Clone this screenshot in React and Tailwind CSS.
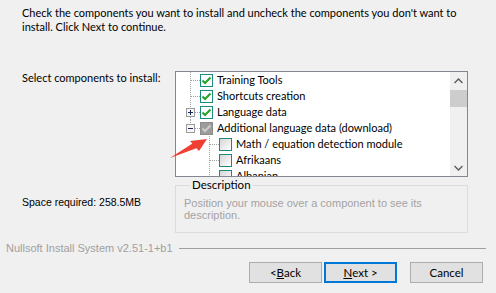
import React from 'react';

const ui = "font-['Lato',sans-serif]";
const tahoma = "font-['Liberation_Sans',sans-serif]";

const Dotted = (props) => (
  <line {...props} stroke="#a0a0a0" strokeWidth="1" strokeDasharray="1 1" />
);

const CheckBox = ({ state }) => {
  if (state === 'on') {
    return (
      <span className="w-[13px] h-[13px] border border-[#1c8a7e] bg-white flex items-center justify-center shrink-0">
        <svg width="11" height="11" viewBox="0 0 11 11">
          <polyline points="1.5,5.5 4,8 9.5,2.5" fill="none" stroke="#22a322" strokeWidth="2" />
        </svg>
      </span>
    );
  }
  if (state === 'gray') {
    return (
      <span className="w-[13px] h-[13px] border border-[#8c8c8c] bg-[#9c9c9c] flex items-center justify-center shrink-0">
        <svg width="11" height="11" viewBox="0 0 11 11">
          <polyline points="1.5,5.5 4,8 9.5,2.5" fill="none" stroke="#cdcdcd" strokeWidth="2" />
        </svg>
      </span>
    );
  }
  return <span className="w-[13px] h-[13px] border border-[#1c8a7e] bg-linear-to-br from-[#d6d6d6] to-white shrink-0" />;
};

const Expander = ({ open }) => (
  <>
    <rect x="10.5" y="4.5" width="8" height="8" fill="#f7f7f7" stroke="#9a9a9a" />
    <line x1="12" y1="8.5" x2="17" y2="8.5" stroke="#1b2a5a" />
    {!open && <line x1="14.5" y1="6" x2="14.5" y2="11" stroke="#1b2a5a" />}
  </>
);

const Gutter1 = ({ kind }) => (
  <svg width="24" height="16" className="shrink-0">
    {kind === 'leaf' && (
      <>
        <Dotted x1="14.5" y1="0" x2="14.5" y2="16" />
        <Dotted x1="15" y1="8.5" x2="24" y2="8.5" />
      </>
    )}
    {kind === 'plus' && (
      <>
        <Dotted x1="14.5" y1="0" x2="14.5" y2="4" />
        <Dotted x1="14.5" y1="13" x2="14.5" y2="16" />
        <Dotted x1="19" y1="8.5" x2="24" y2="8.5" />
        <Expander open={false} />
      </>
    )}
    {kind === 'minus' && (
      <>
        <Dotted x1="14.5" y1="0" x2="14.5" y2="4" />
        <Dotted x1="19" y1="8.5" x2="24" y2="8.5" />
        <Expander open />
      </>
    )}
  </svg>
);

const Gutter2 = () => (
  <svg width="43" height="16" className="shrink-0">
    <Dotted x1="33.5" y1="0" x2="33.5" y2="16" />
    <Dotted x1="34" y1="8.5" x2="43" y2="8.5" />
  </svg>
);

const rows = [
  { level: 1, kind: 'leaf', box: 'on', label: 'Training Tools' },
  { level: 1, kind: 'leaf', box: 'on', label: 'Shortcuts creation' },
  { level: 1, kind: 'plus', box: 'on', label: 'Language data' },
  { level: 1, kind: 'minus', box: 'gray', label: 'Additional language data (download)' },
  { level: 2, box: 'off', label: 'Math / equation detection module' },
  { level: 2, box: 'off', label: 'Afrikaans' },
  { level: 2, box: 'off', label: 'Albanian' },
];

const Chevron = ({ up }) => (
  <svg width="9" height="6" viewBox="0 0 9 6">
    <polyline
      points={up ? '0.5,5 4.5,1 8.5,5' : '0.5,1 4.5,5 8.5,1'}
      fill="none"
      stroke="#606060"
      strokeWidth="1.5"
    />
  </svg>
);

const Button = ({ children, primary }) => (
  <button
    className={`w-[73px] h-[21px] bg-[#e1e1e1] flex items-center justify-center text-[11.5px] text-black ${ui} ${
      primary ? 'border-2 border-[#0078d7]' : 'border border-[#adadad]'
    }`}
  >
    {children}
  </button>
);

export default function App() {
  return (
    <div className={`w-[496px] h-[293px] bg-[#f0f0f0] overflow-hidden relative text-black ${ui}`}>
      {/* Intro */}
      <p className="pl-[22px] pt-[6px] text-[11px] leading-[14px]">
        Check the components you want to install and uncheck the components you don't want to
        <br />
        install. Click Next to continue.
      </p>

      {/* Component tree */}
      <div className="flex mt-[37px]">
        <div className="w-[175px] pl-[22px] text-[11px] leading-[14px]">Select components to install:</div>
        <div className="w-[293px] h-[106px] border border-[#828790] bg-white flex">
          <div className="flex-1 h-[104px] overflow-hidden text-[11px]">
            {rows.map((r) => (
              <div key={r.label} className="h-[16px] flex items-center whitespace-nowrap">
                {r.level === 1 ? <Gutter1 kind={r.kind} /> : <Gutter2 />}
                <CheckBox state={r.box} />
                <span className="ml-[4px] leading-[16px]">{r.label}</span>
              </div>
            ))}
          </div>
          <div className="w-[17px] bg-[#f0f0f0] flex flex-col">
            <div className="h-[17px] flex items-center justify-center">
              <Chevron up />
            </div>
            <div className="h-[17px] mt-[1px] bg-[#cdcdcd]" />
            <div className="flex-1" />
            <div className="h-[17px] flex items-center justify-center">
              <Chevron />
            </div>
          </div>
        </div>
      </div>

      {/* Space + description */}
      <div className="flex mt-[1px]">
        <div className={`w-[175px] pl-[22px] pt-[17px] text-[10.5px] leading-[14px] ${tahoma}`}>
          Space required: 258.5MB
        </div>
        <fieldset className="w-[293px] h-[55px] border border-[#dcdcdc] pl-[8px]">
          <legend className="ml-[6px] px-[2px] text-[11.5px] leading-[14px]">Description</legend>
          <p className={`text-[11px] leading-[12px] text-[#a3a3a3] mt-[5px] ${tahoma}`}>
            Position your mouse over a component to see its
            <br />
            description.
          </p>
        </fieldset>
      </div>

      {/* Branding line */}
      <div className="flex items-center mt-[8px] pl-[6px] pr-[10px] h-[14px]">
        <span className={`text-[11px] text-[#a0a0a0] ${tahoma}`}>Nullsoft Install System v2.51-1+b1</span>
        <div className="flex-1 h-px bg-[#a0a0a0] ml-[6px]" />
      </div>

      {/* Buttons */}
      <div className="flex mt-[7px] pl-[249px]">
        <Button>
          {'< '}
          <span className="underline">B</span>ack
        </Button>
        <div className="ml-[2px]">
          <Button primary>
            <span className="underline">N</span>
            {'ext >'}
          </Button>
        </div>
        <div className="ml-[13px]">
          <Button>Cancel</Button>
        </div>
      </div>

      {/* Annotation arrow */}
      <svg className="absolute left-0 top-0 pointer-events-none" width="496" height="293">
        <polygon points="170,158 194,142.5 197,148" fill="#ef3e32" />
        <polygon points="207,139 190,141 199,151" fill="#ef3e32" />
      </svg>
    </div>
  );
}
